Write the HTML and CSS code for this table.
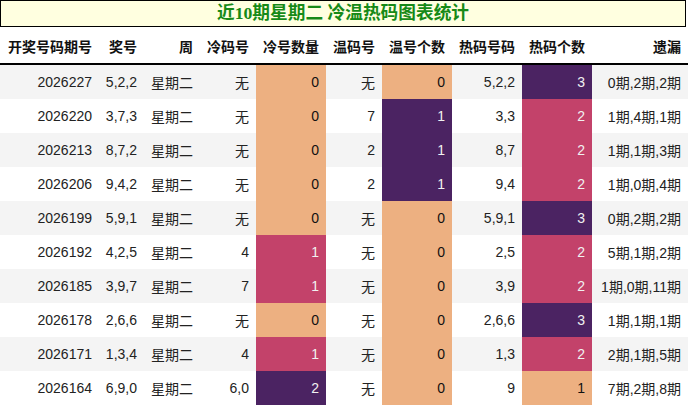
FILE: index.html
```html
<!DOCTYPE html>
<html lang="zh">
<head>
<meta charset="utf-8">
<title>近10期星期二 冷温热码图表统计</title>
<link rel="stylesheet" href="styles.css">
</head>
<body>
<div class="title">近10期星期二 冷温热码图表统计</div>
<table class="stats">
  <colgroup>
    <col class="c1"><col class="c2"><col class="c3"><col class="c4"><col class="c5">
    <col class="c6"><col class="c7"><col class="c8"><col class="c9"><col class="c10">
  </colgroup>
  <thead>
    <tr>
      <th>开奖号码期号</th><th>奖号</th><th>周</th><th>冷码号</th><th>冷号数量</th>
      <th>温码号</th><th>温号个数</th><th>热码号码</th><th>热码个数</th><th>遗漏</th>
    </tr>
  </thead>
  <tbody>
    <tr><td>2026227</td><td>5,2,2</td><td>星期二</td><td>无</td><td class="lo">0</td><td>无</td><td class="lo">0</td><td>5,2,2</td><td class="hi">3</td><td>0期,2期,2期</td></tr>
    <tr><td>2026220</td><td>3,7,3</td><td>星期二</td><td>无</td><td class="lo">0</td><td>7</td><td class="hi">1</td><td>3,3</td><td class="mid">2</td><td>1期,4期,1期</td></tr>
    <tr><td>2026213</td><td>8,7,2</td><td>星期二</td><td>无</td><td class="lo">0</td><td>2</td><td class="hi">1</td><td>8,7</td><td class="mid">2</td><td>1期,1期,3期</td></tr>
    <tr><td>2026206</td><td>9,4,2</td><td>星期二</td><td>无</td><td class="lo">0</td><td>2</td><td class="hi">1</td><td>9,4</td><td class="mid">2</td><td>1期,0期,4期</td></tr>
    <tr><td>2026199</td><td>5,9,1</td><td>星期二</td><td>无</td><td class="lo">0</td><td>无</td><td class="lo">0</td><td>5,9,1</td><td class="hi">3</td><td>0期,2期,2期</td></tr>
    <tr><td>2026192</td><td>4,2,5</td><td>星期二</td><td>4</td><td class="mid">1</td><td>无</td><td class="lo">0</td><td>2,5</td><td class="mid">2</td><td>5期,1期,2期</td></tr>
    <tr><td>2026185</td><td>3,9,7</td><td>星期二</td><td>7</td><td class="mid">1</td><td>无</td><td class="lo">0</td><td>3,9</td><td class="mid">2</td><td>1期,0期,11期</td></tr>
    <tr><td>2026178</td><td>2,6,6</td><td>星期二</td><td>无</td><td class="lo">0</td><td>无</td><td class="lo">0</td><td>2,6,6</td><td class="hi">3</td><td>1期,1期,1期</td></tr>
    <tr><td>2026171</td><td>1,3,4</td><td>星期二</td><td>4</td><td class="mid">1</td><td>无</td><td class="lo">0</td><td>1,3</td><td class="mid">2</td><td>2期,1期,5期</td></tr>
    <tr><td>2026164</td><td>6,9,0</td><td>星期二</td><td>6,0</td><td class="hi">2</td><td>无</td><td class="lo">0</td><td>9</td><td class="lo">1</td><td>7期,2期,8期</td></tr>
  </tbody>
</table>
</body>
</html>
```

FILE: styles.css
```css
html, body {
  margin: 0;
  padding: 0;
  background: #ffffff;
}

body {
  font-family: "Liberation Sans", "Noto Sans CJK SC", sans-serif;
  font-size: 14px;
  color: #222222;
}

.title {
  box-sizing: border-box;
  width: 686px;
  height: 27px;
  border: 1px solid #000000;
  background: #ffffe0;
  color: #178a17;
  font-family: "Liberation Serif", "Noto Sans CJK SC", serif;
  font-weight: bold;
  font-size: 17.7px;
  line-height: 25px;
  text-align: center;
}

.stats {
  border-collapse: collapse;
  table-layout: fixed;
  width: 688px;
}

.c1 { width: 99px; }
.c2 { width: 45px; }
.c3 { width: 56px; }
.c4 { width: 56px; }
.c5 { width: 70px; }
.c6 { width: 56px; }
.c7 { width: 70px; }
.c8 { width: 70px; }
.c9 { width: 70px; }
.c10 { width: 96px; }

.stats th,
.stats td {
  padding: 0 7px 0 0;
  text-align: right;
  white-space: nowrap;
  overflow: visible;
}

.stats th {
  height: 34px;
  font-weight: bold;
  color: #111111;
  border-bottom: 2px solid #000000;
  padding-top: 2px;
}

.stats td {
  height: 34px;
}

.stats tbody tr:nth-child(odd) {
  background: #f4f4f4;
}

.stats tbody tr:nth-child(even) {
  background: #ffffff;
}

.stats td.lo {
  background: #edb081;
  color: #111111;
}

.stats td.mid {
  background: #c3426a;
  color: #f1f1f1;
}

.stats td.hi {
  background: #4b2362;
  color: #f1f1f1;
}
```
